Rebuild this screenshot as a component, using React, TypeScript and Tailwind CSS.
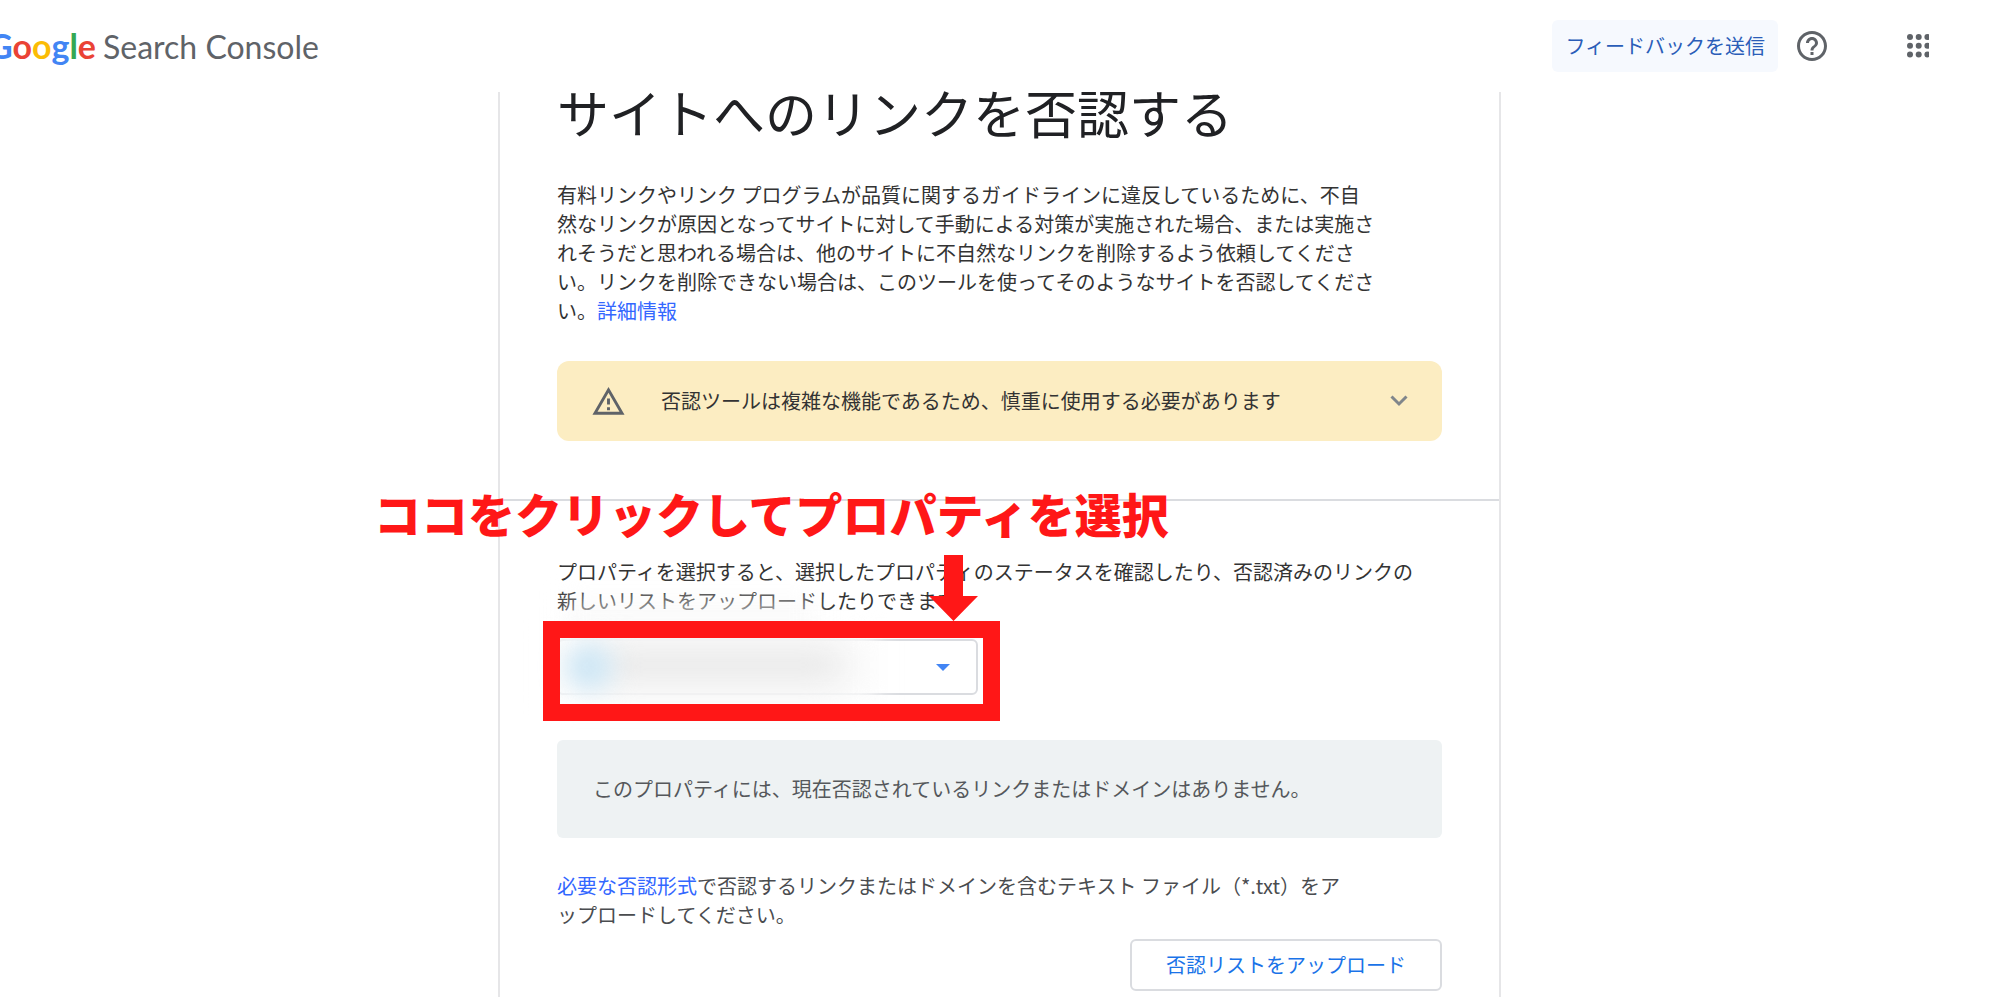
import { useState } from "react";

const logoLetters = [
	{ char: "G", color: "text-[#4285f4]" },
	{ char: "o", color: "text-[#ea4335]" },
	{ char: "o", color: "text-[#fbbc05]" },
	{ char: "g", color: "text-[#4285f4]" },
	{ char: "l", color: "text-[#34a853]" },
	{ char: "e", color: "text-[#ea4335]" }
];

function HelpIcon() {
	return (
		<svg width="36" height="36" viewBox="0 0 24 24" fill="#5f6368">
			<path d="M11 18h2v-2h-2v2zm1-16C6.48 2 2 6.48 2 12s4.48 10 10 10 10-4.48 10-10S17.52 2 12 2zm0 18c-4.41 0-8-3.59-8-8s3.59-8 8-8 8 3.59 8 8-3.59 8-8 8zm0-14c-2.21 0-4 1.79-4 4h2c0-1.1.9-2 2-2s2 .9 2 2c0 2-3 1.75-3 5h2c0-2.25 3-2.5 3-5 0-2.21-1.79-4-4-4z" />
		</svg>
	);
}

function AppsIcon() {
	const rows = [3, 11.7, 20.4];
	return (
		<svg width="22" height="24" viewBox="0 0 22 24" fill="#5f6368">
			{rows.map((y) =>
				rows.map((x) => <circle key={`${x}-${y}`} cx={x} cy={y} r="3" />)
			)}
		</svg>
	);
}

function WarningIcon() {
	return (
		<svg width="35" height="35" viewBox="0 0 24 24" fill="#5f6368">
			<path d="M12 5.99L19.53 19H4.47L12 5.99M12 2L1 21h22L12 2zm1 14h-2v2h2v-2zm0-6h-2v4h2v-4z" />
		</svg>
	);
}

function Header() {
	return (
		<header className="flex h-23 items-center justify-between overflow-hidden bg-white pr-[70px]">
			<a href="#" className="-ml-3 flex items-baseline gap-[7px] whitespace-nowrap font-['Lato','Liberation_Sans',sans-serif]">
				<span className="text-[34px] leading-10 font-bold">
					{logoLetters.map((letter, i) => (
						<span key={i} className={letter.color}>
							{letter.char}
						</span>
					))}
				</span>
				<span className="text-[32px] leading-10 text-[#5f6368]">Search Console</span>
			</a>
			<div className="flex items-center">
				<button className="h-13 rounded-md bg-[#f6f9fe] px-[13px] text-xl text-[#2a5db8]">
					フィードバックを送信
				</button>
				<button aria-label="ヘルプ" className="ml-4">
					<HelpIcon />
				</button>
				<button aria-label="アプリ" className="ml-[77px]">
					<AppsIcon />
				</button>
			</div>
		</header>
	);
}

function PropertySelect() {
	const [property, setProperty] = useState("");

	return (
		<div className="relative mt-6 w-[421px]">
			<select
				id="property"
				value={property}
				onChange={(e) => setProperty(e.target.value)}
				className="block h-14 w-full appearance-none rounded-md border-2 border-[#dadce0] bg-white px-4 text-xl"
			>
				<option value=""></option>
			</select>
			<svg className="pointer-events-none absolute top-[25px] right-7" width="14" height="7" viewBox="0 0 14 7" fill="#4285f4">
				<path d="M0 0h14L7 7z" />
			</svg>
			{/* hidden property name */}
			<div className="pointer-events-none absolute -top-10 left-2 h-20 w-[250px] bg-[#f8f8f8]/60 blur-md" />
			<div className="pointer-events-none absolute -top-2 -left-2 h-18 w-[330px] bg-[#fcfcfc] blur-md" />
			<div className="pointer-events-none absolute top-2 left-10 h-9 w-[250px] rounded-full bg-[#e9e9e9] blur-lg" />
			<div className="pointer-events-none absolute top-1 left-2 h-12 w-12 rounded-full bg-[#cfe7f5] blur-md" />
			{/* highlight frame and arrow */}
			<div className="pointer-events-none absolute -top-[18px] -left-[14px] h-[100px] w-[457px] border-[17px] border-[#ff1717]" />
			<svg className="pointer-events-none absolute -top-21 left-93" width="49" height="66" viewBox="0 0 49 66" fill="#ff1717">
				<path d="M15 0h19v41h15L24.500 66 0 41h15z" />
			</svg>
		</div>
	);
}

export default function App() {
	return (
		<div
			lang="ja"
			className="flex min-h-screen flex-col bg-white font-['Noto_Sans_CJK_JP',sans-serif] text-xl text-[#333333]"
		>
			<Header />
			<main className="mx-auto w-full max-w-[1003px] flex-1 border-x-2 border-[#e6e6e8] pb-1">
				<section className="px-[57px] pb-[58px]">
					<h1 className="text-[52px] leading-10 font-normal whitespace-nowrap text-[#202124]">
						サイトへのリンクを否認する
					</h1>
					<p className="mt-12 max-w-[41em] leading-[29px]">
						有料リンクやリンク プログラムが品質に関するガイドラインに違反しているために、不自然なリンクが原因となってサイトに対して手動による対策が実施された場合、または実施されそうだと思われる場合は、他のサイトに不自然なリンクを削除するよう依頼してください。リンクを削除できない場合は、このツールを使ってそのようなサイトを否認してください。
						<a href="#" className="text-[#3367ff]">詳細情報</a>
					</p>
					<button className="mt-9 flex h-20 w-full items-center rounded-xl bg-[#fcedc2] px-[34px] text-left">
						<WarningIcon />
						<span className="ml-[35px] flex-1">
							否認ツールは複雑な機能であるため、慎重に使用する必要があります
						</span>
						<svg width="18" height="12" viewBox="0 0 18 12" fill="none" stroke="#80868b" strokeWidth="3">
							<path d="M1.500 1.500 9 9l7.500-7.500" />
						</svg>
					</button>
				</section>
				<section className="relative border-t-2 border-[#dadce0] px-[57px] pt-14">
					<p className="absolute -top-3 -left-[126px] text-[47px] leading-12 font-black whitespace-nowrap text-[#ff1717]">
						ココをクリックしてプロパティを選択
					</p>
					<label htmlFor="property" className="block max-w-[43em] leading-[29px]">
						プロパティを選択すると、選択したプロパティのステータスを確認したり、否認済みのリンクの新しいリストをアップロードしたりできます。
					</label>
					<PropertySelect />
					<div className="mt-[45px] flex h-[98px] items-center rounded-md bg-[#eef2f3] px-9 text-[#55585b]">
						このプロパティには、現在否認されているリンクまたはドメインはありません。
					</div>
					<p className="mt-[33px] max-w-[40em] leading-[29px] text-[#4a4c4f]">
						<a href="#" className="text-[#3367ff]">必要な否認形式</a>
						で否認するリンクまたはドメインを含むテキスト ファイル（*.txt）をアップロードしてください。
					</p>
					<div className="mt-[10px] flex justify-end">
						<button className="h-13 rounded-md border-2 border-[#dadce0] px-[34px] text-[#1a73e8]">
							否認リストをアップロード
						</button>
					</div>
				</section>
			</main>
		</div>
	);
}
